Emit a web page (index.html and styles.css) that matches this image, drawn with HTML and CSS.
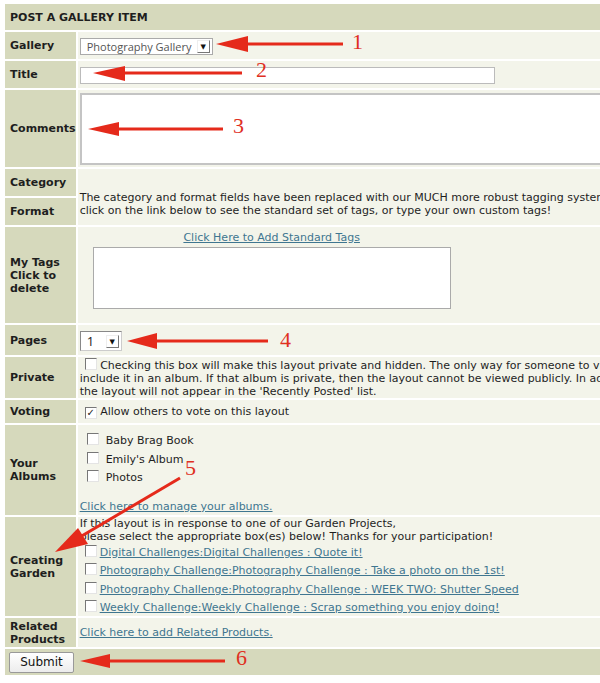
FILE: index.html
```html
<!DOCTYPE html>
<html lang="en">
<head>
    <meta charset="UTF-8">
    <title>Post a Gallery Item</title>
    <link rel="stylesheet" href="styles.css">
</head>
<body>
    <form class="post-form">
        <table class="form-table">
            <tr class="row-head">
                <th colspan="2">POST A GALLERY ITEM</th>
            </tr>
            <tr class="row-gallery">
                <td class="label">Gallery</td>
                <td class="field">
                    <span class="select select-gallery">Photography Gallery<span class="select-btn">&#9660;</span></span>
                </td>
            </tr>
            <tr class="row-title">
                <td class="label">Title</td>
                <td class="field"><span class="text-input"></span></td>
            </tr>
            <tr class="row-comments">
                <td class="label">Comments</td>
                <td class="field"><span class="textarea"></span></td>
            </tr>
            <tr class="row-category">
                <td class="label">Category</td>
                <td class="field note" rowspan="2">
                    The category and format fields have been replaced with our MUCH more robust tagging system. Please<br>
                    click on the link below to see the standard set of tags, or type your own custom tags!
                </td>
            </tr>
            <tr class="row-format">
                <td class="label">Format</td>
            </tr>
            <tr class="row-tags">
                <td class="label">My Tags<br>Click to<br>delete</td>
                <td class="field">
                    <div class="tags-box">
                        <a href="#">Click Here to Add Standard Tags</a>
                        <span class="tags-area"></span>
                    </div>
                </td>
            </tr>
            <tr class="row-pages">
                <td class="label">Pages</td>
                <td class="field">
                    <span class="select select-pages">1<span class="select-btn">&#9660;</span></span>
                </td>
            </tr>
            <tr class="row-private">
                <td class="label">Private</td>
                <td class="field note">
                    <span class="check"></span> Checking this box will make this layout private and hidden. The only way for someone to view it is to<br>
                    include it in an album. If that album is private, then the layout cannot be viewed publicly. In addition,<br>
                    the layout will not appear in the 'Recently Posted' list.
                </td>
            </tr>
            <tr class="row-voting">
                <td class="label">Voting</td>
                <td class="field note"><span class="check checked">&#10003;</span> Allow others to vote on this layout</td>
            </tr>
            <tr class="row-albums">
                <td class="label">Your<br>Albums</td>
                <td class="field">
                    <ul class="album-list">
                        <li><span class="check"></span>Baby Brag Book</li>
                        <li><span class="check"></span>Emily's Album</li>
                        <li><span class="check"></span>Photos</li>
                    </ul>
                    <a href="#">Click here to manage your albums.</a>
                </td>
            </tr>
            <tr class="row-garden">
                <td class="label">Creating<br>Garden</td>
                <td class="field note">
                    If this layout is in response to one of our Garden Projects,<br>
                    please select the appropriate box(es) below! Thanks for your participation!
                    <ul class="challenge-list">
                        <li><span class="check"></span><a href="#">Digital Challenges:Digital Challenges : Quote it!</a></li>
                        <li><span class="check"></span><a href="#">Photography Challenge:Photography Challenge : Take a photo on the 1st!</a></li>
                        <li><span class="check"></span><a href="#">Photography Challenge:Photography Challenge : WEEK TWO: Shutter Speed</a></li>
                        <li><span class="check"></span><a href="#">Weekly Challenge:Weekly Challenge : Scrap something you enjoy doing!</a></li>
                    </ul>
                </td>
            </tr>
            <tr class="row-related">
                <td class="label">Related<br>Products</td>
                <td class="field"><a href="#">Click here to add Related Products.</a></td>
            </tr>
            <tr class="row-submit">
                <td colspan="2"><button type="button" class="submit-btn">Submit</button></td>
            </tr>
        </table>
    </form>

    <!-- red callout arrows drawn over the form -->
    <svg class="callouts" width="600" height="683" viewBox="0 0 600 683">
        <g class="arrow">
            <line x1="244" y1="44" x2="343" y2="44"/>
            <polygon points="216,44 248,36 248,52"/>
        </g>
        <text x="352" y="49">1</text>

        <g class="arrow">
            <line x1="120" y1="73" x2="242" y2="73"/>
            <polygon points="93,73 125,66 125,81"/>
        </g>
        <text x="256" y="77">2</text>

        <g class="arrow">
            <line x1="115" y1="129" x2="223" y2="129"/>
            <polygon points="88,129 119,122 119,136"/>
        </g>
        <text x="233" y="133">3</text>

        <g class="arrow">
            <line x1="152" y1="341" x2="268" y2="341"/>
            <polygon points="127,341 157,333 157,349"/>
        </g>
        <text x="280" y="347">4</text>

        <g class="arrow">
            <line x1="180" y1="478" x2="80" y2="537"/>
            <polygon points="55,552 78,528 88,544"/>
        </g>
        <text x="185" y="475">5</text>

        <g class="arrow">
            <line x1="106" y1="661" x2="225" y2="661"/>
            <polygon points="80,661 110,654 110,668"/>
        </g>
        <text x="236" y="665">6</text>
    </svg>
</body>
</html>
```

FILE: styles.css
```css
html, body {
    overflow: hidden;
}
body {
    margin: 0;
    padding: 2px 0 0 3px;
    background: white;
    font-family: "DejaVu Sans", Verdana, sans-serif;
    font-size: 11px;
    color: #1e1e1e;
    position: relative;
    width: 597px;
    height: 681px;
}
a {
    color: #3f7690;
}
.form-table {
    border-collapse: separate;
    border-spacing: 2px;
    width: 700px;
}
.form-table td,
.form-table th {
    padding: 0;
}
.row-head th {
    background: #d6d9bc;
    height: 26px;
    text-align: left;
    padding-left: 5px;
    font-size: 11px;
}
.label {
    background: #d6d9bc;
    width: 63px;
    padding-left: 5px !important;
    font-weight: bold;
    line-height: 13px;
    vertical-align: middle;
}
.field {
    background: #f3f4ea;
    padding-left: 2px !important;
    vertical-align: middle;
}
.note {
    line-height: 13px;
    white-space: nowrap;
}

.row-gallery td { height: 27px; }
.row-title td { height: 27px; }
.row-comments td { height: 77px; }
.row-category td.label { height: 27px; }
.row-format td.label { height: 27px; }
.row-tags td { height: 96px; }
.row-pages td { height: 30px; }
.row-private td { height: 41px; }
.row-voting td { height: 23px; }
.row-albums td { height: 90px; }
.row-garden td { height: 96px; }
.row-related td { height: 29px; }

.row-category .note {
    padding-top: 14px;
}

/* fake form controls */
.select {
    display: inline-flex;
    align-items: center;
    justify-content: space-between;
    box-sizing: border-box;
    background: white;
    border: 1px solid #aaa;
    color: #555;
    padding-left: 6px;
    font-family: "Open Sans", "DejaVu Sans", sans-serif;
    font-size: 11px;
}
.select-gallery {
    width: 133px;
    height: 17px;
    margin-top: 1px;
}
.select-pages {
    width: 42px;
    height: 20px;
    color: #222;
    font-size: 13px;
    border-color: #888 #ccc #ccc #888;
    margin-top: 2px;
}
.select-btn {
    display: inline-block;
    width: 11px;
    height: 11px;
    margin-right: 2px;
    border: 1px solid #999;
    border-color: #eee #777 #777 #eee;
    font-size: 7px;
    line-height: 11px;
    text-align: center;
    color: #111;
}
.text-input {
    display: block;
    box-sizing: border-box;
    width: 415px;
    height: 17px;
    margin-top: 1px;
    background: white;
    border: 1px solid #bbb;
}
.textarea {
    display: block;
    box-sizing: border-box;
    width: 560px;
    height: 72px;
    background: white;
    border: 2px solid #c4c4c4;
    border-right: none;
}
.tags-box {
    width: 358px;
    margin-left: 13px;
    text-align: center;
    padding-bottom: 10px;
}
.tags-area {
    display: block;
    box-sizing: border-box;
    height: 62px;
    margin-top: 3px;
    background: white;
    border: 1px solid #aaa;
}
.check {
    display: inline-block;
    box-sizing: border-box;
    width: 12px;
    height: 12px;
    background: white;
    border-top: 1px solid #777;
    border-left: 1px solid #777;
    border-right: 1px solid #e4e4e4;
    border-bottom: 1px solid #e4e4e4;
    vertical-align: -1px;
    margin-left: 5px;
    font-size: 10px;
    line-height: 10px;
    text-align: center;
    color: #222;
}
.album-list,
.challenge-list {
    list-style: none;
    margin: 0;
    padding: 0;
}
.album-list {
    padding-top: 5px;
    margin-bottom: 12px;
}
.album-list li {
    height: 18.5px;
    line-height: 18px;
}
.album-list .check {
    margin-left: 7px;
    margin-right: 7px;
}
.challenge-list li {
    height: 18.3px;
    line-height: 20px;
}
.challenge-list .check {
    margin-right: 3px;
}
.row-submit td {
    background: #d6d9bc;
    height: 26px;
    padding-left: 4px;
    vertical-align: middle;
}
.submit-btn {
    width: 65px;
    height: 21px;
    background: linear-gradient(#ffffff, #ececec);
    border: 1px solid #999;
    border-radius: 2px;
    font-family: "DejaVu Sans", sans-serif;
    font-size: 12px;
    color: #111;
    padding: 0;
}

/* overlay */
.callouts {
    position: absolute;
    top: 0;
    left: 0;
    pointer-events: none;
}
.callouts .arrow line {
    stroke: #e52a1b;
    stroke-width: 3;
}
.callouts .arrow polygon {
    fill: #e52a1b;
}
.callouts text {
    font-family: "Liberation Serif", serif;
    font-size: 22px;
    fill: #e0301f;
}
```
